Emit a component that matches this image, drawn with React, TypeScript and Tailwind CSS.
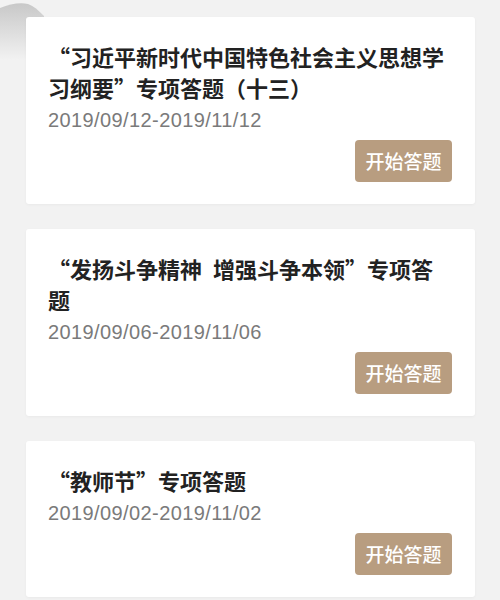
import React from "react";

type Quiz = { title: React.ReactNode; range: string };

const quizzes: Quiz[] = [
  {
    title: "“习近平新时代中国特色社会主义思想学习纲要”专项答题（十三）",
    range: "2019/09/12-2019/11/12",
  },
  {
    title: "“发扬斗争精神\u2002增强斗争本领”专项答题",
    range: "2019/09/06-2019/11/06",
  },
  {
    title: "“教师节”专项答题",
    range: "2019/09/02-2019/11/02",
  },
];

function QuizCard({ title, range }: Quiz) {
  return (
    <div className="flex flex-col rounded-[3px] bg-white pt-6 pb-[22px] pl-[22px] pr-[23px] shadow-[0_1px_3px_rgba(0,0,0,0.04)]">
      <h2 className="w-[400px] text-[22px] font-semibold leading-[31px] text-[#222] [font-family:'Noto_Sans_CJK_SC',sans-serif]">
        {title}
      </h2>
      <p className="mt-1 text-[20px] leading-[26px] tracking-[0.4px] text-[#7a7a7a] [font-family:'Liberation_Sans','Noto_Sans_CJK_SC',sans-serif]">
        {range}
      </p>
      <div className="mt-[7px] flex justify-end">
        <button className="h-[42px] w-[97px] rounded-[4px] bg-[#b89d80] text-[19px] font-medium text-white [font-family:'Noto_Sans_CJK_SC',sans-serif]">
          开始答题
        </button>
      </div>
    </div>
  );
}

export default function App() {
  return (
    <div className="relative h-[600px] w-[500px] overflow-hidden bg-[#f2f2f2]">
      <svg className="absolute left-0 top-0" width="60" height="60" viewBox="0 0 60 60">
        <defs>
          <linearGradient id="blob" x1="0" y1="0" x2="0" y2="1">
            <stop offset="0" stopColor="#c8c8c8" />
            <stop offset="1" stopColor="#f2f2f2" />
          </linearGradient>
        </defs>
        <path d="M0 8 C10 4 20 2 28 4 C34 6 38 10 44 16 L44 60 L0 60 Z" fill="url(#blob)" />
      </svg>
      <div className="relative flex flex-col gap-[25px] pl-[26px] pr-[25px] pt-[17px]">
        {quizzes.map((q) => (
          <QuizCard key={q.range} {...q} />
        ))}
      </div>
    </div>
  );
}
